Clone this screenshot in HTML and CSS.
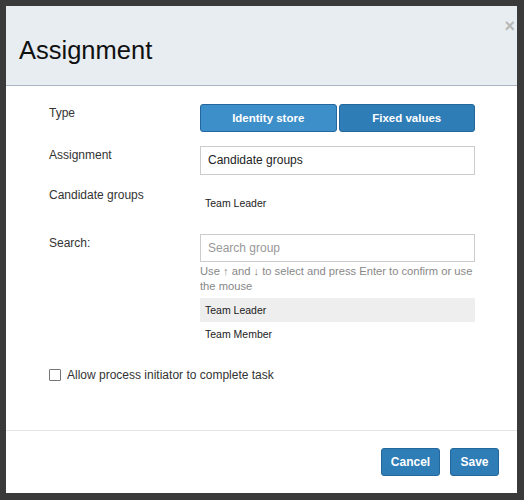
FILE: index.html
```html
<!DOCTYPE html>
<html>
<head>
  <meta name="viewport" content="width=device-width, initial-scale=1">
  <title>Assignment</title>
  <link rel="stylesheet" href="styles.css">
</head>
<body>
  <div class="modal">
    <div class="modal-header">
      <h1>Assignment</h1>
      <span class="close">&times;</span>
    </div>

    <div class="modal-body">
      <div class="row row-type">
        <label>Type</label>
        <div class="control btn-group">
          <button class="btn btn-active">Identity store</button>
          <button class="btn">Fixed values</button>
        </div>
      </div>

      <div class="row row-assign">
        <label>Assignment</label>
        <div class="control">
          <div class="input">Candidate groups</div>
        </div>
      </div>

      <div class="row row-groups">
        <label>Candidate groups</label>
        <div class="control">
          <div class="value">Team Leader</div>
        </div>
      </div>

      <div class="row row-search">
        <label>Search:</label>
        <div class="control">
          <div class="input placeholder">Search group</div>
          <p class="help">Use &#8593; and &#8595; to select and press Enter to confirm or use the mouse</p>
          <ul class="results">
            <li class="selected">Team Leader</li>
            <li>Team Member</li>
          </ul>
        </div>
      </div>

      <div class="checkbox-row">
        <span class="box"></span>
        <span>Allow process initiator to complete task</span>
      </div>
    </div>

    <div class="modal-footer">
      <button class="btn">Cancel</button>
      <button class="btn">Save</button>
    </div>
  </div>
</body>
</html>
```

FILE: styles.css
```css
* {
  margin: 0;
  padding: 0;
  box-sizing: border-box;
}

body {
  font-family: 'Liberation Sans', Arial, Helvetica, sans-serif;
  background: #3a3a3a;
  padding: 6px 7px 7px 6px;
  color: #333;
}

.modal {
  background: #fff;
  width: 511px;
}

.modal-header {
  position: relative;
  background: #e8edf1;
  border-bottom: 1px solid #a9b3bd;
  height: 80px;
  padding: 29px 0 0 13px;
}

.modal-header h1 {
  font-size: 25.5px;
  font-weight: normal;
  color: #111;
  line-height: 30px;
}

.close {
  position: absolute;
  top: 10px;
  right: 2px;
  font-size: 18px;
  font-weight: bold;
  color: #b8b8b8;
  line-height: 20px;
}

.modal-body {
  padding: 18px 42px 46px 43px;
}

.row {
  display: flex;
  align-items: flex-start;
  margin-bottom: 14px;
}

.row label {
  width: 151px;
  font-size: 12px;
  line-height: 18px;
  color: #333;
}

.control {
  width: 275px;
}

.row-assign {
  margin-bottom: 11px;
}

.row-groups {
  height: 34px;
}

.btn-group {
  display: flex;
  gap: 2px;
}

.btn {
  font-family: inherit;
  font-size: 12px;
  font-weight: bold;
  color: #fff;
  background: #2e7db7;
  border: 1px solid #23679c;
  border-radius: 3px;
  height: 28px;
  padding: 0 10px;
}

.btn-group .btn {
  flex: 1;
  font-size: 11.5px;
}

.btn-group .btn-active {
  background: #3c8fc9;
}

.input {
  height: 29px;
  border: 1px solid #ccc;
  font-size: 12px;
  line-height: 27px;
  padding-left: 7px;
  color: #222;
}

.input.placeholder {
  height: 28px;
  line-height: 26px;
  color: #999;
}

.value {
  font-size: 10.5px;
  line-height: 15px;
  padding: 10px 0 0 5px;
  color: #222;
}

.help {
  font-size: 11.2px;
  line-height: 15px;
  color: #888;
  margin-top: 2px;
}

.results {
  list-style: none;
  margin-top: 4px;
}

.results li {
  font-size: 10.5px;
  line-height: 24px;
  padding-left: 5px;
  color: #222;
}

.results li.selected {
  background: #eee;
}

.checkbox-row {
  display: flex;
  align-items: center;
  gap: 6px;
  margin-top: 20px;
  font-size: 12px;
  line-height: 18px;
  color: #333;
}

.checkbox-row .box {
  width: 12px;
  height: 12px;
  border: 1px solid #777;
  border-radius: 1px;
  background: #fff;
}

.modal-footer {
  border-top: 1px solid #e5e5e5;
  display: flex;
  justify-content: flex-end;
  gap: 10px;
  padding: 17px 18px 17px 0;
}

.modal-footer .btn {
  padding: 0;
  width: 59px;
}

.modal-footer .btn + .btn {
  width: 49px;
}
```
